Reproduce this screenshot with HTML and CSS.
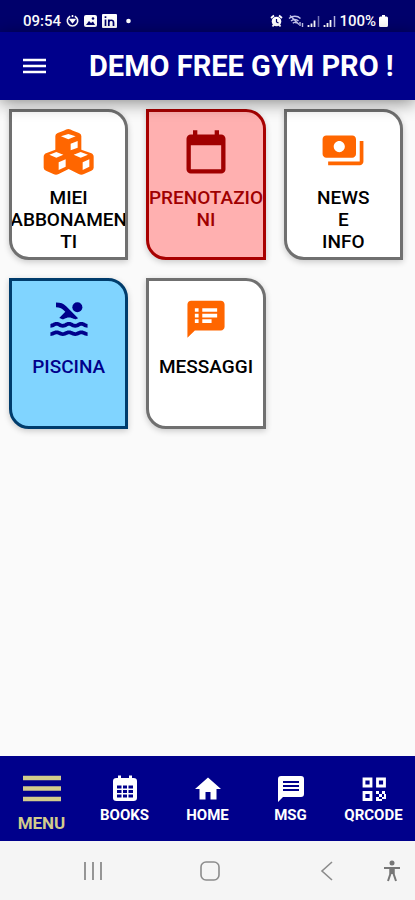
FILE: index.html
```html
<!DOCTYPE html>
<html lang="it">
<head>
<meta charset="utf-8">
<meta name="viewport" content="width=device-width, initial-scale=1">
<title>Demo Free Gym Pro</title>
<link rel="stylesheet" href="styles.css">
</head>
<body>
<div class="screen">
  <div class="status">
    <div class="status-group">
      <span>09:54</span>
      <svg width="13" height="14" viewBox="0 0 13 14" fill="none" stroke="#fff" stroke-width="1.6"><path d="M4.2 2.2a5.2 5.2 0 1 0 4.6 0M6.500 1v2"/><path d="M4.300 5.500l2.200 3 2.200-3z" fill="#fff"/></svg>
      <svg width="13" height="14" viewBox="0 0 13 14"><rect y="1" width="13" height="12" rx="2" fill="#fff"/><path d="M2 11l3-4 2 2 2-1.500 2 3.500z" fill="#00006b"/><circle cx="9" cy="4.500" r="1.300" fill="#00006b"/></svg>
      <svg width="15" height="14" viewBox="0 0 15 14"><rect width="15" height="14" rx="1" fill="#fff"/><path d="M3.500 5.500V12M3.500 2.300v1.800M6.800 12V5.500M6.800 8.500c0-3 4.700-3 4.700 0V12" fill="none" stroke="#00006b" stroke-width="1.700"/></svg>
      <svg class="dot" width="5" height="14" viewBox="0 0 5 14"><circle cx="2.500" cy="7" r="2.300" fill="#fff"/></svg>
    </div>
    <div class="status-group tight">
      <svg width="13" height="14" viewBox="0 0 13 14"><circle cx="6.500" cy="7.500" r="4.800" fill="#fff"/><path d="M1 4l3-2.500M12 4L9 1.500M2.500 12.500l1.500-2M10.500 12.500l-1.500-2" stroke="#fff" stroke-width="1.800"/><path d="M6.500 5v3l2 1" fill="none" stroke="#00006b" stroke-width="1.200"/></svg>
      <svg class="wifi" width="16" height="14" viewBox="0 0 16 14" fill="none" stroke="#c4c4ec" stroke-width="1.400"><path d="M1 4.500c3.200-3 8.500-3 11.500 0M3 7c2.200-2 5.500-2 7.500 0M4.800 9.200c1.200-1 2.700-1 3.900 0M2 1.500l9 9"/><path d="M12 8v4M14.500 9v4"/></svg>
      <svg width="13" height="14" viewBox="0 0 13 14" fill="none"><path d="M1.500 13v-2M4.500 13V9.500M7.500 13V6.500" stroke="#fff" stroke-width="1.800"/><path d="M11.500 13V2" stroke="#7777b8" stroke-width="1.500"/></svg>
      <svg width="13" height="14" viewBox="0 0 13 14" fill="none"><path d="M1.500 13v-2M4.500 13V9M7.500 13V6" stroke="#fff" stroke-width="1.800"/><path d="M11.500 13V2" stroke="#b6b6e0" stroke-width="1.500"/></svg>
      <span>100%</span>
      <svg width="9" height="14" viewBox="0 0 9 14"><path d="M3 1h3v1.500h1.500Q9 2.500 9 4v7.500Q9 13 7.500 13h-6Q0 13 0 11.500V4Q0 2.500 1.500 2.500H3z" fill="#fff"/></svg>
    </div>
  </div>

  <header class="appbar">
    <button class="burger" type="button" aria-label="Menu">
      <svg width="24" height="18" viewBox="0 0 24 18"><path d="M0 3h23M0 9h23M0 15h23" stroke="#fff" stroke-width="2.400"/></svg>
    </button>
    <h1 class="title">DEMO FREE GYM PRO !</h1>
  </header>

  <main class="grid">
    <button class="card" type="button">
      <svg class="icon" viewBox="128 84 156 156">
        <path d="M204 87q6 0 14 5l18 7q7 3 7 9v41l28 10q9 3 9 11v33q0 6-7 9l-22 10q-8 4-16 0l-30-15-30 15q-8 4-16 0l-22-10q-7-3-7-9v-33q0-8 9-11l26-10v-41q0-6 7-9l18-7q8-5 14-5z" fill="#ff6600"/>
        <path d="M204 102l22 7-22 9-22-9zM168 156l21 8-21 9-21-9zM241 156l22 8-22 9-21-9zM211 131l21-8v20l-21 8zM175 187l21-9v22l-21 10zM247 187l20-9v22l-20 10z" fill="#fff"/>
      </svg>
      <span class="label">MIEI ABBONAMENTI</span>
    </button>
    <button class="card red" type="button">
      <svg class="icon" viewBox="0 0 24 24"><path fill="currentColor" d="M19 19H5V8h14m-3-7v2H8V1H6v2H5c-1.110 0-2 .9-2 2v14a2 2 0 0 0 2 2h14a2 2 0 0 0 2-2V5a2 2 0 0 0-2-2h-1V1"/></svg>
      <span class="label">PRENOTAZIONI</span>
    </button>
    <button class="card" type="button">
      <svg class="icon" viewBox="-2 0 28 28"><path fill="#ff6600" d="M19 14V6c0-1.100-.9-2-2-2H3c-1.100 0-2 .9-2 2v8c0 1.100.9 2 2 2h14c1.100 0 2-.9 2-2zm-9-1c-1.660 0-3-1.340-3-3s1.340-3 3-3 3 1.340 3 3-1.340 3-3 3zm13-6v11c0 1.100-.9 2-2 2H4v-2h17V7h2z"/></svg>
      <span class="label">NEWS<br>E<br>INFO</span>
    </button>
    <button class="card blue" type="button">
      <svg class="icon" viewBox="-2 0 28 28"><g fill="currentColor"><circle cx="16.500" cy="5.500" r="2.700"/><path d="M22 21c-1.110 0-1.730-.37-2.180-.64-.37-.22-.6-.36-1.150-.36-.56 0-.78.13-1.150.36-.46.27-1.070.64-2.180.64s-1.730-.37-2.180-.64c-.37-.22-.6-.36-1.150-.36-.56 0-.78.13-1.150.36-.46.27-1.080.64-2.190.64-1.110 0-1.730-.37-2.180-.64-.37-.23-.6-.36-1.150-.36s-.78.13-1.150.36c-.46.27-1.080.64-2.190.64v-2c.56 0 .78-.13 1.150-.36.46-.27 1.080-.64 2.190-.64s1.730.37 2.180.64c.37.23.59.36 1.150.36.56 0 .78-.13 1.150-.36.46-.27 1.080-.64 2.190-.64 1.110 0 1.730.37 2.180.64.37.22.6.36 1.150.36s.78-.13 1.150-.36c.45-.27 1.070-.64 2.180-.64s1.730.37 2.180.64c.37.23.59.36 1.150.36v2zm0-4.500c-1.110 0-1.730-.37-2.180-.64-.37-.22-.6-.36-1.150-.36-.56 0-.78.13-1.150.36-.45.27-1.070.64-2.180.64s-1.730-.37-2.180-.64c-.37-.22-.6-.36-1.150-.36-.56 0-.78.13-1.150.36-.45.27-1.070.64-2.180.64s-1.730-.37-2.180-.64c-.37-.22-.6-.36-1.150-.36s-.78.13-1.150.36c-.47.27-1.090.64-2.200.64v-2c.56 0 .78-.13 1.150-.36.45-.27 1.070-.64 2.180-.64s1.730.37 2.180.64c.37.22.6.36 1.150.36.56 0 .78-.13 1.150-.36.45-.27 1.070-.64 2.180-.64s1.730.37 2.180.64c.37.22.6.36 1.150.36s.78-.13 1.150-.36c.45-.27 1.070-.64 2.180-.64s1.730.37 2.180.64c.37.22.6.36 1.150.36v2zM8.670 12c.56 0 .78-.13 1.150-.36.46-.27 1.080-.64 2.190-.64 1.110 0 1.730.37 2.180.64.37.22.6.36 1.150.36s.78-.13 1.150-.36c.12-.07.26-.15.41-.23L10.480 5C8.930 3.450 7.500 2.990 5 3v2.500c1.820-.01 2.890.39 4 1.500l1 1-3.250 3.250c.31.12.56.27.77.39.37.23.59.36 1.150.36z"/></g></svg>
      <span class="label">PISCINA</span>
    </button>
    <button class="card" type="button">
      <svg class="icon" viewBox="-2 0 28 28"><path fill="#ff6600" d="M20 2H4c-1.100 0-1.990.9-1.990 2L2 22l4-4h14c1.100 0 2-.9 2-2V4c0-1.100-.9-2-2-2zM8 14H6v-2h2v2zm0-3H6V9h2v2zm0-3H6V6h2v2zm7 6h-5v-2h5v2zm3-3h-8V9h8v2zm0-3h-8V6h8v2z"/></svg>
      <span class="label">MESSAGGI</span>
    </button>
  </main>

  <nav class="tabs">
    <a class="tab active" href="#menu">
      <svg width="38" height="28" viewBox="0 0 38 28"><path d="M0 4h38M0 14.500h38M0 25h38" stroke="currentColor" stroke-width="4.500"/></svg>
      <span>MENU</span>
    </a>
    <a class="tab" href="#books">
      <svg width="28" height="28" viewBox="0 0 28 28"><path fill="#fff" d="M5.500 4H7V1.500h3V4h8V1.500h3V4h1.500Q26 4 26 7v17q0 3-3.500 3h-17Q2 27 2 24V7q0-3 3.500-3z"/><path fill="#00008b" d="M6 11.500h4.500v3H6zM12 11.500h4v3h-4zM17.500 11.500H22v3h-4.500zM6 16h4.500v3H6zM12 16h4v3h-4zM17.500 16H22v3h-4.500zM6 20.500h4.500v3H6zM12 20.500h4v3h-4zM17.500 20.500H22v3h-4.500z"/></svg>
      <span>BOOKS</span>
    </a>
    <a class="tab" href="#home">
      <svg width="28" height="28" viewBox="0 0 28 28"><path fill="#fff" d="M11.500 25.500v-7.500h5v7.500h6V15H27L14 3.500 1 15h4.500v10.500z"/></svg>
      <span>HOME</span>
    </a>
    <a class="tab" href="#msg">
      <svg width="30" height="28" viewBox="0 0 30 28"><path fill="#fff" d="M5 2h20q3 0 3 3v15q0 3-3 3H7l-5 5V5q0-3 3-3z"/><path d="M7 8h16M7 12h16M7 16h16" stroke="#00008b" stroke-width="2.200"/></svg>
      <span>MSG</span>
    </a>
    <a class="tab" href="#qrcode">
      <svg width="28" height="28" viewBox="0 0 28 28"><path d="M4 5h7v7H4zM17.500 5h7v7h-7zM4 18.500h7v7H4z" fill="none" stroke="#fff" stroke-width="2.800"/><path fill="#fff" d="M16 17h3v3h-3zM22 17h3v3h-3zM19 20h3v3h-3zM16 23h3v4h-3zM22 23h4v2h-4zM19 25h3v2h-3zM24 20h2v3h-2z"/></svg>
      <span>QRCODE</span>
    </a>
  </nav>

  <div class="sysnav">
    <button type="button" aria-label="Recenti"><svg width="20" height="20" viewBox="0 0 20 20"><path d="M2 1v18M10 1v18M18 1v18" stroke="#8c8c8c" stroke-width="1.800"/></svg></button>
    <button type="button" aria-label="Home"><svg width="20" height="20" viewBox="0 0 20 20"><rect x="1" y="1" width="18" height="18" rx="5" fill="none" stroke="#8c8c8c" stroke-width="1.600"/></svg></button>
    <button type="button" aria-label="Indietro"><svg width="20" height="20" viewBox="0 0 20 20"><path d="M14 1L4 10l10 9" fill="none" stroke="#8c8c8c" stroke-width="1.600"/></svg></button>
    <button class="access" type="button" aria-label="Accessibilità"><svg width="18" height="22" viewBox="0 0 18 22"><circle cx="9" cy="3" r="2.500" fill="#777"/><path d="M1 8h16M7.500 8.500v5L5 21M10.500 8.500v5L13 21" fill="none" stroke="#777" stroke-width="2"/><path d="M6.500 8h5v6h-5z" fill="#777"/></svg></button>
  </div>
</div>
</body>
</html>
```
FILE: styles.css
```css
* {
  box-sizing: border-box;
}

body {
  margin: 0;
  background: #fafafa;
  color: #000;
  font-family: Roboto, "Liberation Sans", sans-serif;
}

button {
  margin: 0;
  padding: 0;
  border: 0;
  background: none;
  color: inherit;
  font: inherit;
}

svg {
  display: block;
  flex: none;
}

.screen {
  display: flex;
  flex-direction: column;
  min-height: 100vh;
}

.status {
  display: flex;
  justify-content: space-between;
  height: 32px;
  padding: 10px 27px 0 23px;
  background: #00006b;
  color: #fff;
  font-size: 15px;
  font-weight: 500;
  line-height: 22px;
}

.status-group {
  display: flex;
  align-items: center;
  gap: 5px;
}

.tight {
  gap: 3px;
}

.dot {
  margin-left: 4px;
}

.wifi {
  margin-left: 2px;
}

.appbar {
  position: relative;
  z-index: 1;
  display: flex;
  align-items: center;
  gap: 42px;
  height: 68px;
  padding: 0 23px;
  background: #00008b;
  color: #fff;
  box-shadow: 0 3px 16px rgba(0, 0, 0, 0.45);
}

.title {
  margin: 0;
  font-size: 29px;
  font-weight: 700;
  line-height: 36px;
  white-space: nowrap;
}

.grid {
  flex: 1;
  display: grid;
  grid-template-columns: repeat(3, minmax(0, 1fr));
  grid-auto-rows: 151px;
  gap: 18px;
  padding: 9px 12px 18px 9px;
}

.card {
  display: flex;
  flex-direction: column;
  align-items: center;
  gap: 7px;
  padding-top: 16px;
  overflow: hidden;
  border: 3px solid #707070;
  border-radius: 0 20px;
  background: #fff;
  box-shadow: 0 2px 6px rgba(0, 0, 0, 0.2);
}

.red {
  border-color: #a80000;
  background: #ffb0b0;
  color: #a00000;
}

.blue {
  border-color: #003c6c;
  background: #80d4ff;
  color: #00008b;
}

.icon {
  width: 52px;
  height: 52px;
}

.label {
  align-self: stretch;
  margin: 0 -3px;
  font-size: 19px;
  font-weight: 500;
  line-height: 22px;
  text-align: center;
  overflow-wrap: anywhere;
}

.tabs {
  display: grid;
  grid-template-columns: repeat(5, 1fr);
  height: 85px;
  background: #00008b;
}

.tab {
  display: flex;
  flex-direction: column;
  align-items: center;
  gap: 4px;
  padding-top: 18px;
  color: #fff;
  font-size: 15px;
  font-weight: 700;
  line-height: 18px;
  text-decoration: none;
}

.active {
  gap: 12px;
  color: #d2cc8c;
  font-size: 17px;
}

.sysnav {
  display: flex;
  align-items: center;
  justify-content: space-between;
  height: 59px;
  padding: 0 14px 0 83px;
  background: #f5f5f5;
}

.access {
  margin-left: -52px;
}
```
